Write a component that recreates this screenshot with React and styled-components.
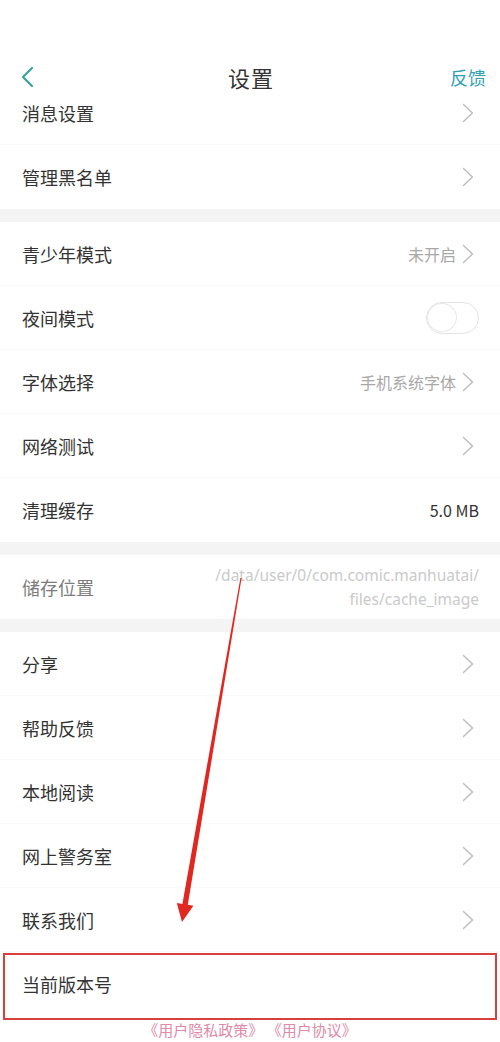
import React from "react";
import styled, { createGlobalStyle } from "styled-components";

const GlobalStyle = createGlobalStyle`
  * { box-sizing: border-box; }
  html, body {
    margin: 0;
    padding: 0;
    background: #ffffff;
  }
  body {
    font-family: "Noto Sans CJK SC", "Noto Sans", sans-serif;
    color: #333333;
  }
`;

const Page = styled.div`
  position: relative;
  width: 500px;
  height: 1042px;
  overflow: hidden;
  background: #ffffff;
`;

const StatusBar = styled.div`
  height: 54px;
`;

const Header = styled.div`
  position: relative;
  z-index: 2;
  height: 46px;
  display: flex;
  align-items: center;
  justify-content: space-between;
  padding: 0 14px 0 20px;
  background: #ffffff;
`;

const BackButton = styled.div`
  width: 40px;
  display: flex;
  align-items: center;
`;

const Title = styled.div`
  font-size: 22px;
  color: #333333;
  letter-spacing: 1px;
  margin-right: 4px;
`;

const HeaderAction = styled.div`
  width: 40px;
  font-size: 18px;
  color: #31a2b4;
  text-align: right;
  white-space: nowrap;
`;

const Scroller = styled.div`
  overflow: hidden;
`;

const List = styled.div`
  margin-top: -19px;
`;

const Section = styled.div`
  background: #ffffff;
  & + & {
    border-top: 13px solid #f4f4f4;
  }
`;

const Row = styled.div`
  position: relative;
  height: 64px;
  display: flex;
  align-items: center;
  justify-content: space-between;
  padding: 0 21px 0 22px;
  border-bottom: 1px solid #f8f8f8;
  &:last-child {
    border-bottom: none;
  }
  ${({ $highlighted }) =>
    $highlighted &&
    `
    &::after {
      content: "";
      position: absolute;
      top: 1px;
      left: 3px;
      right: 3px;
      bottom: -4px;
      border: 2px solid #d8413b;
      pointer-events: none;
    }
  `}
`;

const Label = styled.div`
  font-size: 18px;
  color: ${({ $muted }) => ($muted ? "#7c7c7c" : "#333333")};
`;

const Right = styled.div`
  display: flex;
  align-items: center;
  gap: 6px;
`;

const Value = styled.div`
  font-size: 16px;
  color: ${({ $dark }) => ($dark ? "#333333" : "#a8a8a8")};
`;

const PathValue = styled.div`
  font-family: "Noto Sans", sans-serif;
  font-size: 15.5px;
  line-height: 24px;
  color: #cacaca;
  text-align: right;
`;

const ChevronBox = styled.div`
  display: flex;
  margin-right: 5px;
`;

const Toggle = styled.div`
  width: 53px;
  height: 32px;
  border: 1.5px solid #e3e3e3;
  border-radius: 16px;
  display: flex;
  align-items: center;
`;

const Knob = styled.div`
  width: 30px;
  height: 29px;
  border-radius: 50%;
  border: 1.5px solid #e8e8e8;
  background: #ffffff;
`;

const Footer = styled.div`
  padding-top: 3px;
  text-align: center;
  font-size: 15px;
  line-height: 22px;
  color: #e08aa8;
  white-space: pre;
`;

const Overlay = styled.svg`
  position: absolute;
  top: 0;
  left: 0;
  z-index: 3;
  pointer-events: none;
`;

const Chevron = () => (
  <ChevronBox>
    <svg width="12" height="20" viewBox="0 0 12 20">
      <polyline
        points="1.5,1.5 10.5,10 1.5,18.5"
        fill="none"
        stroke="#bdbdbd"
        strokeWidth="1.4"
        strokeLinecap="round"
        strokeLinejoin="round"
      />
    </svg>
  </ChevronBox>
);

const BackIcon = () => (
  <svg width="14" height="22" viewBox="0 0 14 22">
    <polyline
      points="12,2 3,11 12,20"
      fill="none"
      stroke="#36a39e"
      strokeWidth="2.2"
      strokeLinecap="round"
      strokeLinejoin="round"
    />
  </svg>
);

const sections = [
  [{ label: "消息设置", chevron: true }, { label: "管理黑名单", chevron: true }],
  [
    { label: "青少年模式", value: "未开启", chevron: true },
    { label: "夜间模式", toggle: true },
    { label: "字体选择", value: "手机系统字体", chevron: true },
    { label: "网络测试", chevron: true },
    { label: "清理缓存", value: "5.0 MB", dark: true },
  ],
  [
    {
      label: "储存位置",
      muted: true,
      path: ["/data/user/0/com.comic.manhuatai/", "files/cache_image"],
    },
  ],
  [
    { label: "分享", chevron: true },
    { label: "帮助反馈", chevron: true },
    { label: "本地阅读", chevron: true },
    { label: "网上警务室", chevron: true },
    { label: "联系我们", chevron: true },
    { label: "当前版本号", highlighted: true },
  ],
];

const App = () => {
  return (
    <Page>
      <GlobalStyle />
      <StatusBar />
      <Header>
        <BackButton>
          <BackIcon />
        </BackButton>
        <Title>设置</Title>
        <HeaderAction>反馈</HeaderAction>
      </Header>
      <Scroller>
        <List>
          {sections.map((rows, i) => (
            <Section key={i}>
              {rows.map((row) => (
                <Row key={row.label} $highlighted={row.highlighted}>
                  <Label $muted={row.muted}>{row.label}</Label>
                  <Right>
                    {row.value && <Value $dark={row.dark}>{row.value}</Value>}
                    {row.path && (
                      <PathValue>
                        {row.path[0]}
                        <br />
                        {row.path[1]}
                      </PathValue>
                    )}
                    {row.toggle && (
                      <Toggle>
                        <Knob />
                      </Toggle>
                    )}
                    {row.chevron && <Chevron />}
                  </Right>
                </Row>
              ))}
            </Section>
          ))}
          <Footer>《用户隐私政策》 《用户协议》</Footer>
        </List>
      </Scroller>
      <Overlay width="500" height="1042" viewBox="0 0 500 1042">
        <polygon
          points="241.6,578.1 187.8,904.7 193.4,905.7 182,922 176.8,902.9 182.4,903.9 240.4,577.9"
          fill="#e1271f"
        />
      </Overlay>
    </Page>
  );
};

export default App;
